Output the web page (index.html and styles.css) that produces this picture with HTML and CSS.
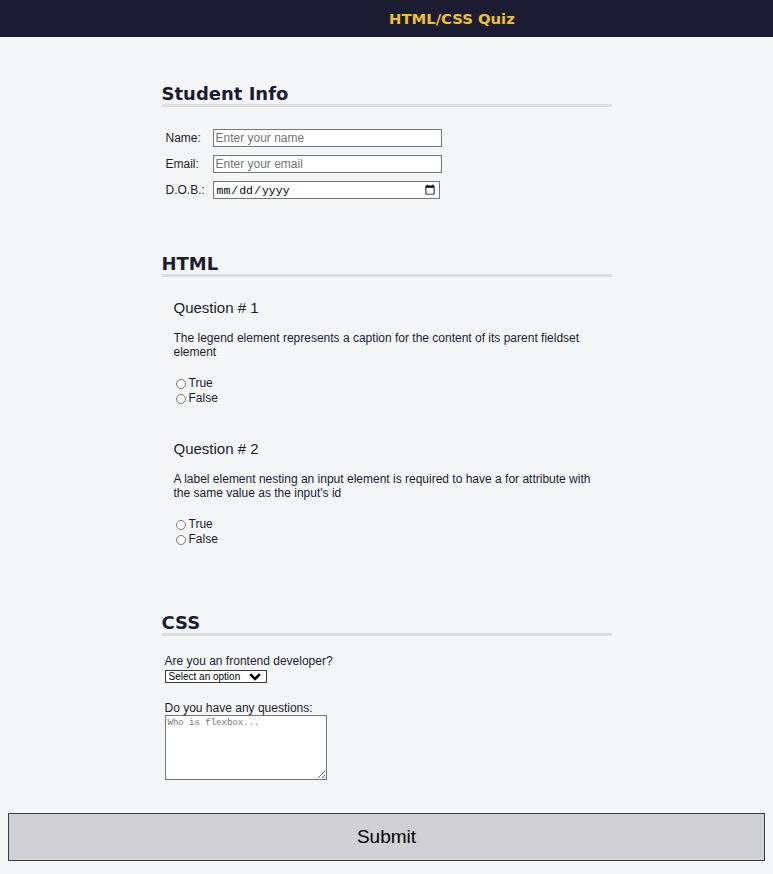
FILE: index.html
```html
<!DOCTYPE html>
<html lang="en">
<head>
<meta charset="utf-8">
<title>HTML/CSS Quiz</title>
<link rel="stylesheet" href="styles.css">
</head>
<body>
<header class="top">
  <h1 class="title">HTML/CSS Quiz</h1>
</header>
<main class="main">
  <form class="quiz">
    <section class="block">
      <h2 class="sec-title first">Student Info</h2>
      <div class="info">
        <div class="row"><label class="lbl" for="student-name">Name:</label><input class="field" id="student-name" type="text" placeholder="Enter your name"></div>
        <div class="row"><label class="lbl" for="student-email">Email:</label><input class="field" id="student-email" type="email" placeholder="Enter your email"></div>
        <div class="row"><label class="lbl" for="birth-date">D.O.B.:</label><input class="field date" id="birth-date" type="date"></div>
      </div>
    </section>

    <section class="block">
      <h2 class="sec-title">HTML</h2>
      <div class="question">
        <div class="qnum">Question # 1</div>
        <p class="qtext">The legend element represents a caption for the content of its parent fieldset element</p>
        <ul class="answers">
          <li class="ans"><label class="opt"><input class="radio" type="radio" name="q1" value="true">True</label></li>
          <li class="ans"><label class="opt"><input class="radio" type="radio" name="q1" value="false">False</label></li>
        </ul>
      </div>
      <div class="question second">
        <div class="qnum">Question # 2</div>
        <p class="qtext">A label element nesting an input element is required to have a for attribute with the same value as the input's id</p>
        <ul class="answers">
          <li class="ans"><label class="opt"><input class="radio" type="radio" name="q2" value="true">True</label></li>
          <li class="ans"><label class="opt"><input class="radio" type="radio" name="q2" value="false">False</label></li>
        </ul>
      </div>
    </section>

    <section class="block">
      <h2 class="sec-title css">CSS</h2>
      <div class="formrow">
        <label class="blk-label" for="customer">Are you an frontend developer?</label>
        <span class="select-wrap">
          <select class="sel" id="customer">
            <option value="">Select an option</option>
            <option value="yes">Yes</option>
            <option value="no">No</option>
          </select>
          <svg class="chev" width="12" height="8" viewBox="0 0 12 8"><path d="M1.2 1.2 L6 6 L10.8 1.2" fill="none" stroke="#000" stroke-width="2.6"/></svg>
        </span>
        <label class="blk-label ask" for="questions">Do you have any questions:</label>
        <textarea class="area" id="questions" placeholder="Who is flexbox..."></textarea>
      </div>
    </section>

    <button class="submit" type="submit">Submit</button>
  </form>
</main>
</body>
</html>
```

FILE: styles.css
```css
* { box-sizing: border-box; }

body {
  margin: 0;
  background: #f5f6f7;
  color: #1b1b32;
  font-family: "Liberation Sans", Arial, sans-serif;
  font-size: 12px;
}

.top {
  height: 37px;
  background: #1b1b32;
  display: flex;
  align-items: center;
}

.title {
  margin: 0 0 0 389px;
  font-family: "DejaVu Sans", Verdana, sans-serif;
  font-weight: bold;
  font-size: 14.8px;
  line-height: 18px;
  color: #f1be32;
}

.main {
  padding: 0 8px;
}

.quiz {
  display: flex;
  flex-direction: column;
}

.block {
  width: 450px;
  margin: 0 auto;
  display: flex;
  flex-direction: column;
}

.sec-title {
  margin: 54px 0 0 0;
  font-family: "DejaVu Sans", Verdana, sans-serif;
  font-weight: bold;
  font-size: 18px;
  line-height: 21px;
  height: 24px;
  color: #1b1b32;
  border-bottom: 3px solid #dfdfe2;
}

.sec-title.first { margin-top: 46px; }
.sec-title.css { margin-top: 65px; }

.info {
  margin-top: 22px;
  padding-left: 4px;
  display: flex;
  flex-direction: column;
  gap: 8px;
}

.row {
  display: flex;
  align-items: center;
  height: 18px;
}

.lbl {
  width: 47px;
  font-size: 12px;
}

.field {
  width: 229px;
  height: 18px;
  margin: 0;
  padding: 0 2px;
  border: 1px solid #767676;
  border-radius: 0;
  background: #fff;
  font-family: "Liberation Sans", Arial, sans-serif;
  font-size: 12px;
  color: #000;
}

.field::placeholder { color: #757575; }

.field.date {
  width: 227px;
  font-family: "Liberation Mono", "DejaVu Sans Mono", monospace;
  font-size: 11.5px;
  padding: 0 1px 0 2px;
}

.question {
  padding: 0 11px 0 12px;
  margin-top: 22px;
  display: flex;
  flex-direction: column;
}

.question.second { margin-top: 34px; }

.qnum {
  font-size: 15px;
  line-height: 17px;
}

.qtext {
  margin: 15px 0 0 0;
  font-size: 12px;
  line-height: 14px;
}

.answers {
  list-style: none;
  margin: 17px 0 0 0;
  padding: 0 0 0 2px;
}

.ans {
  height: 15px;
  display: flex;
  align-items: center;
}

.opt {
  display: flex;
  align-items: center;
  font-size: 12px;
  line-height: 15px;
}

.radio {
  width: 10px;
  height: 10px;
  margin: 0 3px 0 0;
}

.formrow {
  padding-left: 3px;
  margin-top: 18px;
  display: flex;
  flex-direction: column;
  align-items: flex-start;
}

.blk-label {
  font-size: 12px;
  line-height: 14px;
}

.blk-label.ask {
  margin-top: 19px;
  line-height: 13px;
}

.select-wrap {
  position: relative;
  margin-top: 2px;
  display: block;
  width: 102px;
  height: 13px;
}

.sel {
  appearance: none;
  -webkit-appearance: none;
  width: 102px;
  height: 13px;
  margin: 0;
  padding: 0 0 0 3px;
  border: 1px solid #3b3b3b;
  border-radius: 0;
  background: #fff;
  font-family: "Liberation Sans", Arial, sans-serif;
  font-size: 10px;
  line-height: 11px;
  color: #000;
  display: block;
}

.chev {
  position: absolute;
  right: 6px;
  top: 3px;
  pointer-events: none;
}

.area {
  width: 162px;
  height: 65px;
  margin: 0;
  padding: 2px;
  border: 1px solid #767676;
  border-radius: 0;
  background: #fff;
  font-family: "Liberation Mono", "DejaVu Sans Mono", monospace;
  font-size: 9px;
  display: block;
}

.area::placeholder { color: #767676; }

.submit {
  margin: 33px 0 20px 0;
  width: 100%;
  height: 48px;
  background: #d0d0d5;
  border: 1px solid #3b3b4f;
  border-radius: 0;
  font-family: "Liberation Sans", Arial, sans-serif;
  font-size: 19px;
  color: #000;
}
```
